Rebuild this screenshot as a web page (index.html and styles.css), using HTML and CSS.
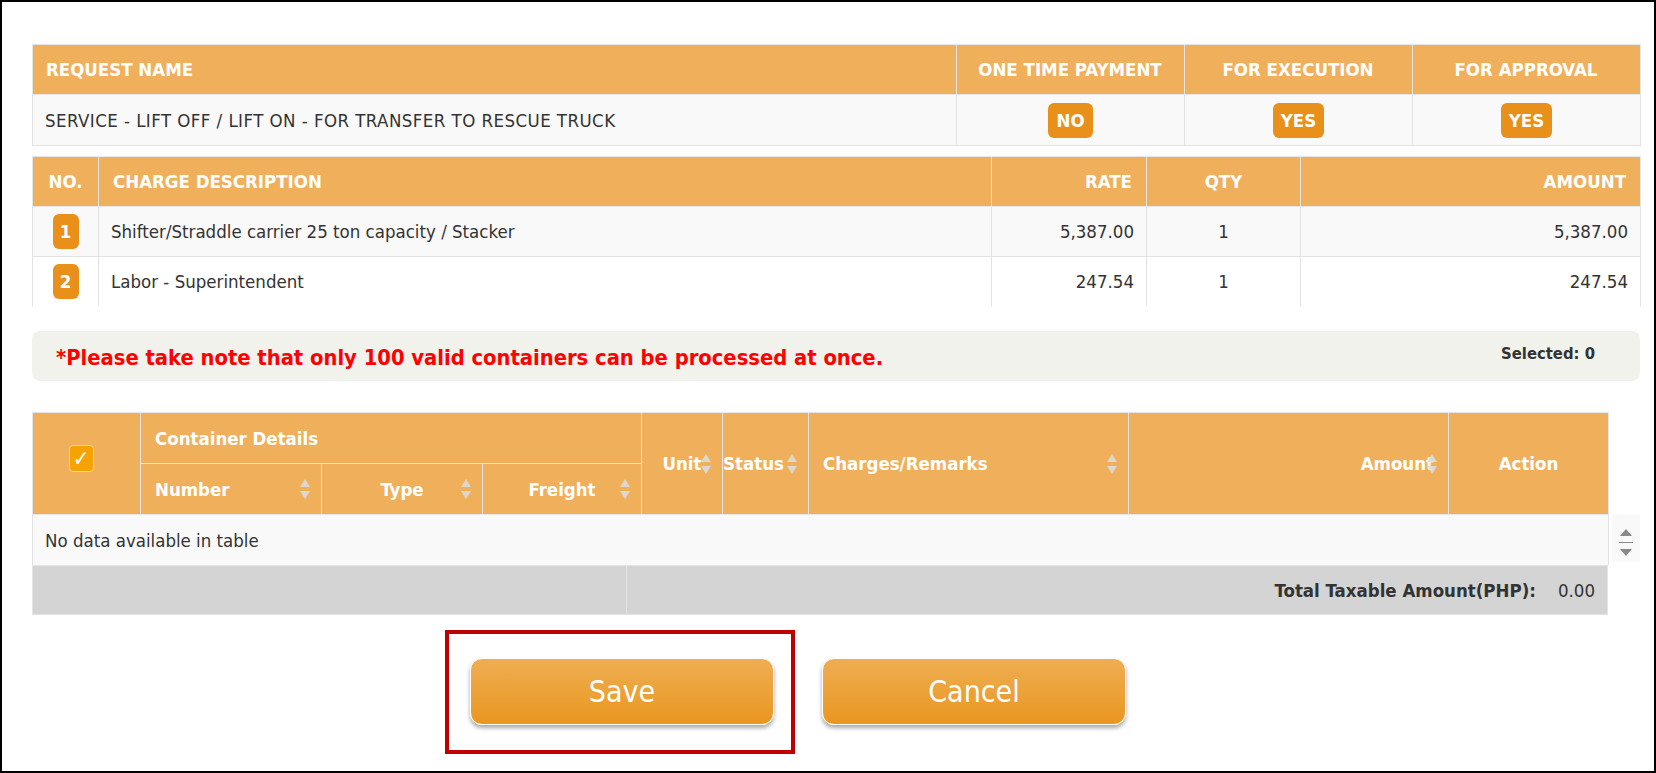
FILE: index.html
```html
<!DOCTYPE html>
<html lang="en">
<head>
    <meta charset="UTF-8">
    <title>Request Charges</title>
    <link rel="stylesheet" href="styles.css">
</head>
<body>
    <div class="frame">
        <table class="grid request-table">
            <colgroup>
                <col style="width:924px"><col style="width:228px"><col style="width:228px"><col style="width:228px">
            </colgroup>
            <thead>
                <tr>
                    <th class="left">REQUEST NAME</th>
                    <th>ONE TIME PAYMENT</th>
                    <th>FOR EXECUTION</th>
                    <th>FOR APPROVAL</th>
                </tr>
            </thead>
            <tbody>
                <tr class="striped">
                    <td class="request-name">SERVICE - LIFT OFF / LIFT ON - FOR TRANSFER TO RESCUE TRUCK</td>
                    <td class="center"><span class="badge">NO</span></td>
                    <td class="center"><span class="badge">YES</span></td>
                    <td class="center"><span class="badge">YES</span></td>
                </tr>
            </tbody>
        </table>

        <table class="grid charge-table">
            <colgroup>
                <col style="width:66px"><col style="width:893px"><col style="width:155px"><col style="width:154px"><col style="width:340px">
            </colgroup>
            <thead>
                <tr>
                    <th>NO.</th>
                    <th class="left">CHARGE DESCRIPTION</th>
                    <th class="right">RATE</th>
                    <th>QTY</th>
                    <th class="right">AMOUNT</th>
                </tr>
            </thead>
            <tbody>
                <tr class="striped">
                    <td class="center"><span class="num">1</span></td>
                    <td>Shifter/Straddle carrier 25 ton capacity / Stacker</td>
                    <td class="right">5,387.00</td>
                    <td class="center">1</td>
                    <td class="right">5,387.00</td>
                </tr>
                <tr class="last">
                    <td class="center"><span class="num">2</span></td>
                    <td>Labor - Superintendent</td>
                    <td class="right">247.54</td>
                    <td class="center">1</td>
                    <td class="right">247.54</td>
                </tr>
            </tbody>
        </table>

        <div class="note">
            <span class="note-text">*Please take note that only 100 valid containers can be processed at once.</span>
            <span class="selected">Selected: 0</span>
        </div>

        <div class="container-wrap">
            <div class="container-box">
                <table class="grid container-table">
                    <colgroup>
                        <col style="width:108px"><col style="width:181px"><col style="width:161px"><col style="width:159px">
                        <col style="width:81px"><col style="width:86px"><col style="width:320px"><col style="width:320px"><col style="width:160px">
                    </colgroup>
                    <thead>
                        <tr>
                            <th rowspan="2" class="check-cell"><span class="check">&#10003;</span></th>
                            <th colspan="3" class="left">Container Details</th>
                            <th rowspan="2" class="sortable">Unit<span class="sort"></span></th>
                            <th rowspan="2" class="sortable status">Status<span class="sort"></span></th>
                            <th rowspan="2" class="left sortable">Charges/Remarks<span class="sort"></span></th>
                            <th rowspan="2" class="right sortable">Amount<span class="sort"></span></th>
                            <th rowspan="2">Action</th>
                        </tr>
                        <tr>
                            <th class="left sortable">Number<span class="sort"></span></th>
                            <th class="sortable">Type<span class="sort"></span></th>
                            <th class="sortable">Freight<span class="sort"></span></th>
                        </tr>
                    </thead>
                    <tbody>
                        <tr class="striped">
                            <td colspan="9">No data available in table</td>
                        </tr>
                    </tbody>
                </table>
                <div class="table-foot">
                    <div class="foot-cell"></div>
                    <div class="foot-cell foot-total"><b>Total Taxable Amount(PHP):</b><span class="total">0.00</span></div>
                </div>
            </div>
            <div class="scroller">
                <span class="arrow-up"></span>
                <span class="bar"></span>
                <span class="arrow-down"></span>
            </div>
        </div>

        <div class="actions">
            <div class="highlight"></div>
            <button class="btn">Save</button>
            <button class="btn">Cancel</button>
        </div>
    </div>
</body>
</html>
```

FILE: styles.css
```css
body { margin: 0; font-family: "DejaVu Sans Condensed", "DejaVu Sans", sans-serif; color: #333; background: #fff; }
.frame { width: 1656px; height: 773px; box-sizing: border-box; border: 2px solid #000; padding: 42px 14px 0 30px; }

.grid { border-collapse: collapse; table-layout: fixed; font-size: 18.5px; }
.grid th { background-color: #f0b05b; color: #fff; font-weight: bold; text-align: center; padding: 0 14px; border: 1px solid #e6e6e6; white-space: nowrap; }
.grid td { padding: 0 12px; border: 1px solid #e3e3e3; background: #fff; white-space: nowrap; }
.grid .left { text-align: left; }
.grid .right { text-align: right; }
.grid .center { text-align: center; }
.grid tr.striped td { background: #f9f9f9; }

.request-table { width: 1608px; }
.request-table th { height: 49px; padding-left: 13px; }
.request-table td { height: 50px; }
.request-table .request-name { letter-spacing: 0.45px; }

.charge-table { width: 1608px; margin-top: 10px; }
.charge-table th { height: 49px; }
.charge-table td { height: 49px; }
.charge-table td:first-child { padding: 0; }
.charge-table tr.last td { border-bottom: none; }

.badge { display: inline-block; background-color: #e9901b; color: #fff; font-weight: bold; padding: 8px 8px; border-radius: 6px; line-height: 19px; }
.num { display: inline-block; background-color: #e9901b; color: #fff; font-weight: bold; width: 26px; height: 35px; line-height: 35px; border-radius: 6px; vertical-align: middle; }

.note { display: flex; justify-content: space-between; align-items: center; height: 50px; margin-top: 25px; padding: 0 45px 0 24px; background: #f2f2ec; border-radius: 8px; }
.note-text { color: #ff0000; font-weight: bold; font-size: 21.75px; margin-top: 2px; }
.selected { font-size: 16.5px; font-weight: bold; margin-bottom: 6px; }

.container-wrap { display: flex; margin-top: 31px; }
.container-box { width: 1576px; }
.container-table { width: 1576px; }
.container-table th { height: 50px; position: relative; }
.container-table th.status { padding: 0 14px 0 0; text-align: left; }
.container-table td { height: 50px; }
.container-table tr.striped td { border-bottom: none; }
.check-cell { padding-right: 25px !important; }
.sort { position: absolute; right: 11px; top: 50%; width: 10px; height: 20px; margin-top: -10px; }
.sort::before, .sort::after { content: ""; position: absolute; left: 0; border-left: 5px solid transparent; border-right: 5px solid transparent; }
.sort::before { top: 0; border-bottom: 8px solid rgba(220, 220, 220, 0.9); }
.sort::after { bottom: 0; border-top: 8px solid rgba(220, 220, 220, 0.9); }
.check { display: inline-block; position: relative; top: -5px; width: 23px; height: 25px; line-height: 25px; background: #f6a200; border: 1px solid #fbd69c; border-radius: 4px; color: #fff; font-size: 22px; font-weight: bold; }

.table-foot { display: grid; grid-template-columns: 593px 1fr; height: 50px; background: #d4d4d4; border: 1px solid #e3e3e3; box-sizing: border-box; font-size: 18.5px; }
.foot-cell + .foot-cell { border-left: 1px solid #e3e3e3; }
.foot-total { display: flex; justify-content: flex-end; align-items: center; padding-right: 12px; }
.total { margin-left: 22px; }

.scroller { display: flex; flex-direction: column; align-items: center; gap: 6px; width: 28px; height: 48px; margin: 102px 0 0 4px; padding-top: 15px; box-sizing: border-box; background: #f9f9f9; }
.arrow-up { border-left: 6px solid transparent; border-right: 6px solid transparent; border-bottom: 7px solid #8a8a8a; }
.arrow-down { border-left: 6px solid transparent; border-right: 6px solid transparent; border-top: 7px solid #8a8a8a; }
.bar { width: 14px; height: 1px; background: #8a8a8a; }

.actions { position: relative; display: flex; gap: 48px; margin: 43px 0 0 438px; }
.btn { width: 304px; height: 67px; border: 1px solid #fff; border-radius: 12px; background: linear-gradient(#eeae52, #ea961f); color: #fff; font-family: inherit; font-size: 30px; box-shadow: 0 3px 4px rgba(0, 0, 0, 0.35); }
.highlight { position: absolute; left: -25px; top: -28px; width: 342px; height: 116px; border: 4px solid #c00000; }
```
